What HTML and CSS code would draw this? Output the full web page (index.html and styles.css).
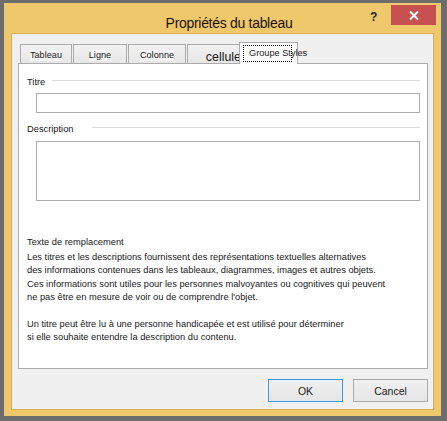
FILE: index.html
```html
<!DOCTYPE html>
<html lang="fr">
<head>
  <meta charset="UTF-8">
  <title>Propriétés du tableau</title>
  <link rel="stylesheet" href="styles.css">
</head>
<body>

  <div class="window">
    <div class="titlebar">
      <div class="title">Propriétés du tableau</div>
      <div class="help">?</div>
      <div class="close">
        <svg width="10" height="9" viewBox="0 0 10 9">
          <path d="M1 0.5 L9 8.5 M9 0.5 L1 8.5" stroke="#fff" stroke-width="2"/>
        </svg>
      </div>
    </div>

    <div class="client">
      <div class="tabs">
        <div class="tab tab-tableau"><span>Tableau</span></div>
        <div class="tab tab-ligne"><span>Ligne</span></div>
        <div class="tab tab-colonne"><span>Colonne</span></div>
        <div class="tab tab-cellule"><span class="big">cellule</span></div>
        <div class="tab tab-active"><span class="focus">Groupe Styles</span></div>
      </div>

      <div class="panel">
        <div class="group-head">
          <span>Titre</span>
          <div class="rule"></div>
        </div>
        <div class="field"></div>

        <div class="group-head group-desc">
          <span>Description</span>
          <div class="rule"></div>
        </div>
        <div class="field field-area"></div>

        <div class="alt-head">Texte de remplacement</div>
        <p class="alt-text">
          Les titres et les descriptions fournissent des représentations textuelles alternatives<br>
          des informations contenues dans les tableaux, diagrammes, images et autres objets.<br>
          Ces informations sont utiles pour les personnes malvoyantes ou cognitives qui peuvent<br>
          ne pas être en mesure de voir ou de comprendre l'objet.
        </p>
        <p class="alt-text">
          Un titre peut être lu à une personne handicapée et est utilisé pour déterminer<br>
          si elle souhaite entendre la description du contenu.
        </p>
      </div>

      <div class="buttons">
        <div class="btn btn-default">OK</div>
        <div class="btn">Cancel</div>
      </div>
    </div>
  </div>

</body>
</html>
```

FILE: styles.css
```css
body {
  margin: 0;
  background: #6d6d6d;
  font-family: "Liberation Sans", Arial, sans-serif;
  color: #1a1a1a;
  height: 421px;
  overflow: hidden;
}

.window {
  margin: 3px 0 0 4px;
  width: 437px;
  height: 413px;
  background: #efc86b;
  display: flex;
  flex-direction: column;
}

.titlebar {
  height: 30px;
  display: flex;
  align-items: flex-start;
}

.title {
  flex: 1;
  text-align: center;
  padding-left: 84px;
  font-size: 14px;
  letter-spacing: -0.3px;
  line-height: 14px;
  margin-top: 13px;
  color: #1c1212;
}

.help {
  width: 21px;
  font-size: 12px;
  font-weight: bold;
  margin-top: 7px;
  color: #222;
}

.close {
  width: 45px;
  height: 20px;
  margin: 2px 5px 0 0;
  background: #c75050;
  display: flex;
  align-items: center;
  justify-content: center;
}

.client {
  flex: 1;
  margin: 0 7px 6px 7px;
  border: 1px solid #d6ae57;
  background: #f0f0f0;
  padding: 8px 5px 0 6px;
  display: flex;
  flex-direction: column;
}

.tabs {
  height: 21px;
  display: flex;
  align-items: flex-end;
  padding-left: 2px;
  position: relative;
  z-index: 1;
  font-size: 9.2px;
}

.tab {
  height: 18px;
  border: 1px solid #acacac;
  border-bottom: none;
  background: linear-gradient(#f2f2f2, #e6e6e6);
  display: flex;
  align-items: flex-end;
  justify-content: center;
  padding-bottom: 2px;
  box-sizing: border-box;
  height: 19px;
}

.tab span {
  background: #f4f4f4;
  line-height: 11px;
}

.tab-tableau { width: 52px; }
.tab-ligne { width: 54px; margin-left: 1px; }
.tab-colonne { width: 58px; margin-left: 1px; }

.tab-cellule {
  width: 53px;
  margin-left: 1px;
  justify-content: flex-end;
  padding-bottom: 0;
  border-right: none;
  overflow: visible;
}

.tab .big {
  background: none;
  font-size: 12.4px;
  line-height: 11px;
  margin-right: -1px;
}

.tab-active {
  width: 59px;
  height: 22px;
  margin-left: -1px;
  margin-bottom: -1px;
  background: #fff;
  justify-content: flex-start;
  align-items: flex-start;
  padding: 3px 0 0 4px;
}

.tab .focus {
  background: none;
  outline: 1px dotted #000;
  outline-offset: 0;
  padding: 2px 2px 2px 5px;
  width: 40px;
  white-space: nowrap;
  line-height: 11px;
}

.panel {
  height: 306px;
  box-sizing: border-box;
  border: 1px solid #acacac;
  background: #fff;
  padding: 0 7px 0 8px;
  font-size: 9.3px;
}

.group-head {
  display: flex;
  align-items: center;
  height: 12px;
  margin-top: 12px;
  line-height: 12px;
}

.group-head .rule {
  flex: 1;
  height: 1px;
  background: #dcdcdc;
  margin: -3px 0 0 7px;
}

.group-desc {
  margin-top: 10px;
}

.group-desc .rule {
  margin-left: 18px;
}

.field {
  height: 20px;
  margin: 5px 0 0 9px;
  border: 1px solid #acacac;
  box-sizing: border-box;
}

.field-area {
  height: 60px;
  margin-top: 6px;
}

.alt-head {
  margin-top: 35px;
  line-height: 13px;
}

.alt-text {
  margin: 2px 0 0 0;
  line-height: 13.4px;
}

.alt-text + .alt-text {
  margin-top: 13.4px;
}

.buttons {
  display: flex;
  justify-content: flex-end;
  gap: 10px;
  margin-top: 10px;
}

.btn {
  width: 75px;
  height: 23px;
  box-sizing: border-box;
  border: 1px solid #acacac;
  background: linear-gradient(#f0f0f0, #e5e5e5);
  display: flex;
  align-items: center;
  justify-content: center;
  font-size: 10.5px;
}

.btn-default {
  border-color: #3c9be6;
}
```
